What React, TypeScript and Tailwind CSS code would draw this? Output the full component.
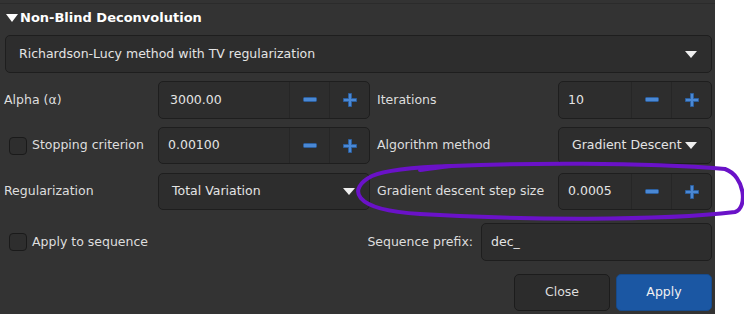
import React from "react";

const font = { fontFamily: '"DejaVu Sans", sans-serif' };

const Minus = () => (
    <svg width="14" height="6" viewBox="0 0 14 6">
        <rect x="0.5" y="0.5" width="13" height="4" rx="1" fill="#4a88d4" stroke="#2c5f9e" />
    </svg>
);

const Plus = () => (
    <svg width="14" height="14" viewBox="0 0 14 14">
        <path
            d="M5.5 0.5h3v5h5v3h-5v5h-3v-5h-5v-3h5z"
            fill="#4a88d4"
            stroke="#2c5f9e"
            strokeWidth="1"
        />
    </svg>
);

const Arrow = () => (
    <svg width="12" height="7" viewBox="0 0 12 7">
        <path d="M0 0h12L6 7z" fill="#eeeeee" />
    </svg>
);

const SpinBox = ({ value, wide }: { value: string; wide?: boolean }) => (
    <div className="flex h-full rounded-[5px] border border-[#1e1e1e] bg-[#2d2d2d]">
        <div className={`flex flex-1 items-center ${wide ? "pl-[11px]" : "pl-[9px]"} text-[#e4e4e4]`}>{value}</div>
        <div className="flex w-[40px] items-center justify-center border-l border-[#262626]">
            <Minus />
        </div>
        <div className="flex w-[40px] items-center justify-center border-l border-[#262626]">
            <Plus />
        </div>
    </div>
);

const Combo = ({ text, pl, pr }: { text: string; pl: string; pr: string }) => (
    <div className={`flex h-full items-center justify-between whitespace-nowrap rounded-[5px] border border-[#1e1e1e] bg-[#2d2d2d] ${pl} ${pr} text-[#e4e4e4]`}>
        <span>{text}</span>
        <Arrow />
    </div>
);

const Check = () => (
    <div className="h-[18px] w-[18px] shrink-0 rounded-[4px] border border-[#1a1a1a] bg-[#2e2e2e]" />
);

const rowCls = "ml-[4px] grid grid-cols-[154px_212px_188px_154px] whitespace-nowrap";

export default function App() {
    return (
        <div className="relative h-[322px] w-[744px] bg-white" style={font}>
            <div className="flex h-[314px] w-[715px] flex-col bg-[#333333] text-[12.5px] text-[#dedede]">
                <div className="mt-[3px] h-px bg-[#2b2b2b]" />
                <div className="flex h-[27px] items-center pl-[6px] pt-[1px] text-[13px]">
                    <svg width="12" height="8" viewBox="0 0 12 8" className="mr-[2px]">
                        <path d="M0 0h12L6 8z" fill="#ffffff" />
                    </svg>
                    <span className="font-bold text-white">Non-Blind Deconvolution</span>
                </div>
                <div className="ml-[5px] mt-[4px] h-[38px] w-[707px]">
                    <Combo text="Richardson-Lucy method with TV regularization" pl="pl-[13px]" pr="pr-[14px]" />
                </div>
                <div className={`${rowCls} mt-[8px] h-[38px]`}>
                    <div className="flex items-center">Alpha (α)</div>
                    <SpinBox value="3000.00" wide />
                    <div className="flex items-center pl-[7px]">Iterations</div>
                    <SpinBox value="10" />
                </div>
                <div className={`${rowCls} mt-[8px] h-[37px]`}>
                    <div className="flex items-center gap-[5px] pl-[5px]">
                        <Check />
                        <span>Stopping criterion</span>
                    </div>
                    <SpinBox value="0.00100" />
                    <div className="flex items-center pl-[7px]">Algorithm method</div>
                    <Combo text="Gradient Descent" pl="pl-[13px]" pr="pr-[14px]" />
                </div>
                <div className={`${rowCls} mt-[9px] h-[37px]`}>
                    <div className="flex items-center">Regularization</div>
                    <Combo text="Total Variation" pl="pl-[13px]" pr="pr-[14px]" />
                    <div className="flex items-center pl-[7px]">Gradient descent step size</div>
                    <SpinBox value="0.0005" />
                </div>
                <div className="ml-[4px] mt-[13px] flex h-[38px] items-center whitespace-nowrap">
                    <div className="flex w-[360px] items-center gap-[5px] pl-[5px]">
                        <Check />
                        <span>Apply to sequence</span>
                    </div>
                    <div className="flex w-[117px] justify-end pr-[8px]">Sequence prefix:</div>
                    <div className="flex h-full w-[231px] items-center rounded-[5px] border border-[#1e1e1e] bg-[#2d2d2d] pl-[9px] text-[#e4e4e4]">
                        dec_
                    </div>
                </div>
                <div className="mt-[13px] flex h-[37px] justify-end gap-[6px] pr-[3px]">
                    <button className="w-[96px] rounded-[5px] border border-[#1c1c1c] bg-[#2c2c2c] text-[#dedede]">Close</button>
                    <button className="w-[96px] rounded-[5px] border border-[#174a8a] bg-[#1b57a3] text-[#f0f0f0]">Apply</button>
                </div>
            </div>
            <svg className="pointer-events-none absolute left-0 top-0" width="744" height="322" viewBox="0 0 744 322">
                <path
                    d="M372 176 C 348 188, 350 210, 420 214 C 520 220, 660 221, 735 212 C 748 208, 745 176, 725 169 C 640 162, 520 163, 452 166 C 420 167, 385 170, 372 176"
                    fill="none"
                    stroke="#6a12c8"
                    strokeWidth="4"
                    strokeLinecap="round"
                />
                <path d="M452 166 C 440 167, 430 169, 420 170" fill="none" stroke="#6a12c8" strokeWidth="4" strokeLinecap="round" />
            </svg>
        </div>
    );
}
